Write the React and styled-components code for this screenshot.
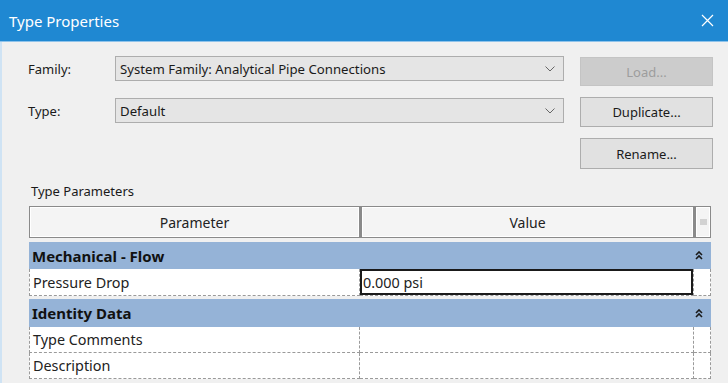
import React from "react";
import styled, { createGlobalStyle } from "styled-components";

const Global = createGlobalStyle`
  html, body { margin: 0; padding: 0; background: #f0f0f0; }
  #root { width: 728px; height: 383px; overflow: hidden; }
  * { box-sizing: border-box; }
`;

const Window = styled.div`
  width: 728px;
  height: 383px;
  background: #f0f0f0;
  font-family: "Noto Sans", "Open Sans", sans-serif;
  color: #1a1a1a;
  display: flex;
  flex-direction: column;
  overflow: hidden;
`;

const TitleBar = styled.div`
  height: 42px;
  flex: none;
  background: #1f88d2;
  border-bottom: 1px solid #8fc3ea;
  display: flex;
  align-items: center;
  justify-content: space-between;
  padding: 0 14px 0 9px;
  color: #ffffff;
  font-size: 15px;
`;

const CloseGlyph = styled.svg`
  width: 13px;
  height: 13px;
  display: block;
`;

const Body = styled.div`
  flex: 1;
  border-left: 2px solid #cfe3f4;
  padding: 14px 0 0 26px;
  display: flex;
  flex-direction: column;
`;

const TopGrid = styled.div`
  display: grid;
  grid-template-columns: 87px 449px 133px;
  grid-template-rows: 30px 30px 31px;
  column-gap: 0;
  row-gap: 11px;
  & > :nth-child(3n) { margin-left: 16px; }
`;

const Label = styled.div`
  font-size: 13px;
  height: 25px;
  margin-top: ${(p) => p.$offset || 0}px;
  display: flex;
  align-items: center;
`;

const Select = styled.div`
  height: 25px;
  background: #e5e5e5;
  border: 1px solid #adadad;
  display: flex;
  align-items: center;
  justify-content: space-between;
  padding: 0 8px 0 4px;
  font-size: 13.2px;
  margin-top: ${(p) => p.$offset || 0}px;
`;

const Chevron = styled.svg`
  width: 10px;
  height: 6px;
  display: block;
`;

const Button = styled.div`
  width: 133px;
  height: ${(p) => p.$h || 30}px;
  margin-top: ${(p) => p.$offset || 0}px;
  background: ${(p) => (p.$disabled ? "#cccccc" : "#e1e1e1")};
  border: 1px solid ${(p) => (p.$disabled ? "#c4c4c4" : "#adadad")};
  color: ${(p) => (p.$disabled ? "#9d9d9d" : "#1a1a1a")};
  font-size: 13px;
  display: flex;
  align-items: center;
  justify-content: center;
`;

const SectionLabel = styled.div`
  font-size: 13px;
  margin: 12px 0 0 3px;
  height: 20px;
  display: flex;
  align-items: center;
`;

const Table = styled.div`
  margin: 5px 0 0 1px;
  width: 682px;
  display: grid;
  grid-template-columns: 331px 334px 17px;
`;

const HeadCell = styled.div`
  height: 32px;
  background: #f4f4f4;
  border: 1px solid #8a8a8a;
  box-shadow: inset 0 0 0 1px #ffffff;
  display: flex;
  align-items: center;
  justify-content: center;
  font-size: 14px;
  color: #222;
  & + & { border-left-width: 2px; }
`;

const HeadMenu = styled.svg`
  width: 7px;
  height: 6px;
  display: block;
`;

const GroupRow = styled.div`
  grid-column: 1 / -1;
  height: ${(p) => p.$h}px;
  margin-top: ${(p) => p.$gap}px;
  background: #95b3d7;
  display: grid;
  grid-template-columns: 1fr 17px;
  align-items: center;
  font-size: 15px;
  font-weight: 700;
  color: #111;
  padding-left: 3px;
`;

const Collapse = styled.svg`
  width: 8px;
  height: 9px;
  display: block;
  margin-left: 1px;
`;

const Cell = styled.div`
  height: ${(p) => p.$h}px;
  background: #ffffff;
  border-bottom: 1px dashed #9a9a9a;
  border-right: 1px dashed #9a9a9a;
  ${(p) => p.$first && "border-left: 1px dashed #9a9a9a;"}
  display: flex;
  align-items: center;
  padding-left: ${(p) => (p.$first ? 3 : 0)}px;
  font-size: 14.4px;
  color: #222;
`;

const Editor = styled.div`
  width: 333px;
  height: 26px;
  border: 2px solid #1a1a1a;
  background: #fff;
  display: flex;
  align-items: center;
  padding-left: 1px;
  font-size: 14.4px;
  color: #222;
`;

const ChevronDown = () => (
  <Chevron viewBox="0 0 10 6">
    <polyline points="0.5,0.5 5,5 9.5,0.5" fill="none" stroke="#666" strokeWidth="1" />
  </Chevron>
);

const DoubleUp = () => (
  <Collapse viewBox="0 0 8 9">
    <polyline points="1,4 4,1 7,4" fill="none" stroke="#1a1a1a" strokeWidth="1.6" />
    <polyline points="1,8 4,5 7,8" fill="none" stroke="#1a1a1a" strokeWidth="1.6" />
  </Collapse>
);

const rows = [
  { group: "Mechanical - Flow", gap: 4, h: 27, rowH: 27, items: [{ name: "Pressure Drop", value: "0.000 psi", edit: true }] },
  { group: "Identity Data", gap: 3, h: 28, rowH: 26, items: [{ name: "Type Comments" }, { name: "Description" }] },
];

export default function App() {
  return (
    <>
      <Global />
      <Window>
        <TitleBar>
          <span>Type Properties</span>
          <CloseGlyph viewBox="0 0 13 13">
            <path d="M1 1 L12 12 M12 1 L1 12" stroke="#fff" strokeWidth="1.2" fill="none" />
          </CloseGlyph>
        </TitleBar>
        <Body>
          <TopGrid>
            <Label>Family:</Label>
            <Select>
              <span>System Family: Analytical Pipe Connections</span>
              <ChevronDown />
            </Select>
            <Button $disabled $h={29} $offset={1}>Load...</Button>
            <Label $offset={1}>Type:</Label>
            <Select $offset={1}>
              <span>Default</span>
              <ChevronDown />
            </Select>
            <Button>Duplicate...</Button>
            <div />
            <div />
            <Button $h={31}>Rename...</Button>
          </TopGrid>
          <SectionLabel>Type Parameters</SectionLabel>
          <Table>
            <HeadCell>Parameter</HeadCell>
            <HeadCell>Value</HeadCell>
            <HeadCell>
              <HeadMenu viewBox="0 0 7 6">
                <path d="M0 1 H7 M0 3 H7 M0 5 H7" stroke="#b0b0b0" strokeWidth="1" />
              </HeadMenu>
            </HeadCell>
            {rows.map((g) => (
              <React.Fragment key={g.group}>
                <GroupRow $gap={g.gap} $h={g.h}>
                  <span>{g.group}</span>
                  <DoubleUp />
                </GroupRow>
                {g.items.map((it) => (
                  <React.Fragment key={it.name}>
                    <Cell $first $h={g.rowH}>{it.name}</Cell>
                    <Cell $h={g.rowH}>{it.edit ? <Editor>{it.value}</Editor> : null}</Cell>
                    <Cell $h={g.rowH} />
                  </React.Fragment>
                ))}
              </React.Fragment>
            ))}
          </Table>
        </Body>
      </Window>
    </>
  );
}
